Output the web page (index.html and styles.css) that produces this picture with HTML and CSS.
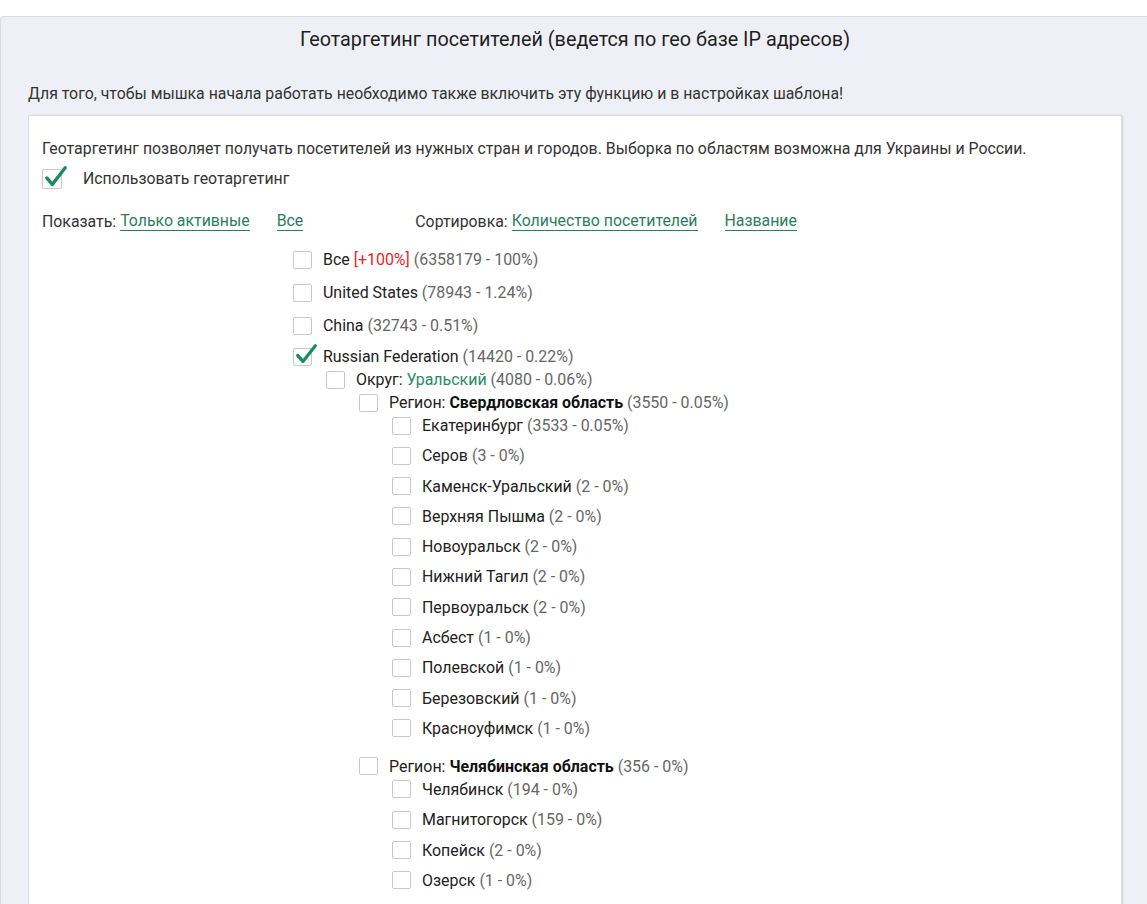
FILE: index.html
```html
<!DOCTYPE html>
<html lang="ru">
<head>
<meta charset="utf-8">
<title>Геотаргетинг</title>
<link rel="stylesheet" href="styles.css">
</head>
<body>
<div class="top-strip"></div>
<div class="panel">
  <h1 class="title">Геотаргетинг посетителей (ведется по гео базе IP адресов)</h1>
  <p class="note">Для того, чтобы мышка начала работать необходимо также включить эту функцию и в настройках шаблона!</p>
  <div class="card">
    <p class="desc">Геотаргетинг позволяет получать посетителей из нужных стран и городов. Выборка по областям возможна для Украины и России.</p>
    <div class="use-row">
      <span class="cb cb-big checked"><svg class="tick" viewBox="0 0 26 26"><path d="M3 14 L9 21 L23 3" /></svg></span>
      <span class="use-label">Использовать геотаргетинг</span>
    </div>
    <div class="filters">
      <div class="fgroup">
        <span class="flabel">Показать:</span>
        <a class="flink">Только активные</a>
        <a class="flink">Все</a>
      </div>
      <div class="fgroup">
        <span class="flabel">Сортировка:</span>
        <a class="flink">Количество посетителей</a>
        <a class="flink">Название</a>
      </div>
    </div>

    <div class="tree">
      <div class="row top"><span class="cb"></span><span class="lbl"><span class="nm">Все</span> <span class="red">[+100%]</span> <span class="cnt">(6358179 - 100%)</span></span></div>
      <div class="row top"><span class="cb"></span><span class="lbl"><span class="nm">United States</span> <span class="cnt">(78943 - 1.24%)</span></span></div>
      <div class="row top"><span class="cb"></span><span class="lbl"><span class="nm">China</span> <span class="cnt">(32743 - 0.51%)</span></span></div>
      <div class="row top-c"><span class="cb checked"><svg class="tick" viewBox="0 0 26 26"><path d="M3 14 L9 21 L23 3" /></svg></span><span class="lbl"><span class="nm">Russian Federation</span> <span class="cnt">(14420 - 0.22%)</span></span></div>
      <div class="lvl">
        <div class="row"><span class="cb"></span><span class="lbl"><span class="nm">Округ:</span> <span class="grn">Уральский</span> <span class="cnt">(4080 - 0.06%)</span></span></div>
        <div class="lvl">
          <div class="group">
            <div class="row"><span class="cb"></span><span class="lbl"><span class="nm">Регион:</span> <b>Свердловская область</b> <span class="cnt">(3550 - 0.05%)</span></span></div>
            <div class="lvl">
              <div class="row city"><span class="cb"></span><span class="lbl"><span class="nm">Екатеринбург</span> <span class="cnt">(3533 - 0.05%)</span></span></div>
              <div class="row city"><span class="cb"></span><span class="lbl"><span class="nm">Серов</span> <span class="cnt">(3 - 0%)</span></span></div>
              <div class="row city"><span class="cb"></span><span class="lbl"><span class="nm">Каменск-Уральский</span> <span class="cnt">(2 - 0%)</span></span></div>
              <div class="row city"><span class="cb"></span><span class="lbl"><span class="nm">Верхняя Пышма</span> <span class="cnt">(2 - 0%)</span></span></div>
              <div class="row city"><span class="cb"></span><span class="lbl"><span class="nm">Новоуральск</span> <span class="cnt">(2 - 0%)</span></span></div>
              <div class="row city"><span class="cb"></span><span class="lbl"><span class="nm">Нижний Тагил</span> <span class="cnt">(2 - 0%)</span></span></div>
              <div class="row city"><span class="cb"></span><span class="lbl"><span class="nm">Первоуральск</span> <span class="cnt">(2 - 0%)</span></span></div>
              <div class="row city"><span class="cb"></span><span class="lbl"><span class="nm">Асбест</span> <span class="cnt">(1 - 0%)</span></span></div>
              <div class="row city"><span class="cb"></span><span class="lbl"><span class="nm">Полевской</span> <span class="cnt">(1 - 0%)</span></span></div>
              <div class="row city"><span class="cb"></span><span class="lbl"><span class="nm">Березовский</span> <span class="cnt">(1 - 0%)</span></span></div>
              <div class="row city"><span class="cb"></span><span class="lbl"><span class="nm">Красноуфимск</span> <span class="cnt">(1 - 0%)</span></span></div>
            </div>
          </div>
          <div class="group">
            <div class="row"><span class="cb"></span><span class="lbl"><span class="nm">Регион:</span> <b>Челябинская область</b> <span class="cnt">(356 - 0%)</span></span></div>
            <div class="lvl">
              <div class="row city"><span class="cb"></span><span class="lbl"><span class="nm">Челябинск</span> <span class="cnt">(194 - 0%)</span></span></div>
              <div class="row city"><span class="cb"></span><span class="lbl"><span class="nm">Магнитогорск</span> <span class="cnt">(159 - 0%)</span></span></div>
              <div class="row city"><span class="cb"></span><span class="lbl"><span class="nm">Копейск</span> <span class="cnt">(2 - 0%)</span></span></div>
              <div class="row city"><span class="cb"></span><span class="lbl"><span class="nm">Озерск</span> <span class="cnt">(1 - 0%)</span></span></div>
            </div>
          </div>
        </div>
      </div>
    </div>
  </div>
</div>
</body>
</html>
```

FILE: styles.css
```css
html, body {
  margin: 0;
  padding: 0;
  background: #ffffff;
  font-family: Roboto, "Liberation Sans", Arial, sans-serif;
  color: #222;
  overflow: hidden;
}

.top-strip {
  height: 16px;
  background: #ffffff;
}

.panel {
  background: #eff0f7;
  border-top: 1px solid #d9dae0;
  border-left: 1px solid #d9dae0;
  border-top-left-radius: 4px;
  height: 900px;
  padding: 0 25px 0 27px;
}

.title {
  margin: 0;
  padding-top: 9px;
  height: 28px;
  line-height: 28px;
  font-size: 19.8px;
  font-weight: 400;
  text-align: center;
  color: #1f1f1f;
}

.note {
  margin: 0;
  padding-top: 30px;
  height: 20px;
  line-height: 20px;
  font-size: 15.85px;
  color: #333;
}

.card {
  margin-top: 11px;
  background: #ffffff;
  border: 1px solid #dcdde2;
  border-radius: 2px;
  box-shadow: 1px 0 2px rgba(0, 0, 0, 0.12);
  padding: 23px 14px 0 13px;
  height: 900px;
}

.desc {
  margin: 0;
  height: 20px;
  line-height: 20px;
  font-size: 15.85px;
  color: #333;
}

.use-row {
  display: flex;
  align-items: center;
  height: 30px;
  margin-top: 4px;
}

.use-label {
  margin-left: 10px;
  font-size: 15.85px;
  color: #333;
}

.filters {
  display: flex;
  gap: 112px;
  margin-top: 15px;
  height: 26px;
  align-items: center;
}

.fgroup {
  display: flex;
  align-items: center;
}

.flabel {
  font-size: 15.85px;
  color: #333;
  margin-right: 4px;
}

.flink {
  font-size: 15.85px;
  color: #2a7d61;
  border-bottom: 1px solid #2a7d61;
  line-height: 19px;
  margin-right: 27px;
  cursor: pointer;
}

.fgroup .flink:last-child {
  margin-right: 0;
}

.tree {
  margin-left: 251px;
  margin-top: 9px;
}

.lvl {
  margin-left: 33px;
}

.row {
  display: flex;
  align-items: center;
  height: 23px;
  font-size: 15.95px;
}

.row.top {
  height: 33px;
}

.row.top-c {
  margin-top: 3px;
}

.row.city {
  margin-bottom: 7.3px;
}

.group {
  margin-bottom: 15px;
}

.cb {
  position: relative;
  flex: 0 0 auto;
  box-sizing: border-box;
  width: 19px;
  height: 18px;
  border: 1px solid #c9c9c9;
  border-radius: 2px;
  background: #fff;
  margin-right: 11px;
}

.cb-big {
  width: 20px;
  height: 20px;
  margin-top: 1px;
}

.tick {
  position: absolute;
  left: 1px;
  top: -6px;
  width: 23px;
  height: 23px;
  overflow: visible;
}

.tick path {
  fill: none;
  stroke: #1a8a64;
  stroke-width: 3.6;
  stroke-linecap: round;
  stroke-linejoin: round;
}

.cb-big .tick {
  left: 1px;
  top: -5px;
  width: 24px;
  height: 24px;
}

.lbl {
  white-space: nowrap;
}

.nm {
  color: #222;
}

.cnt {
  color: #666;
}

.red {
  color: #e3262b;
}

.grn {
  color: #2a8b67;
}

b {
  font-weight: 700;
  color: #111;
}
```
